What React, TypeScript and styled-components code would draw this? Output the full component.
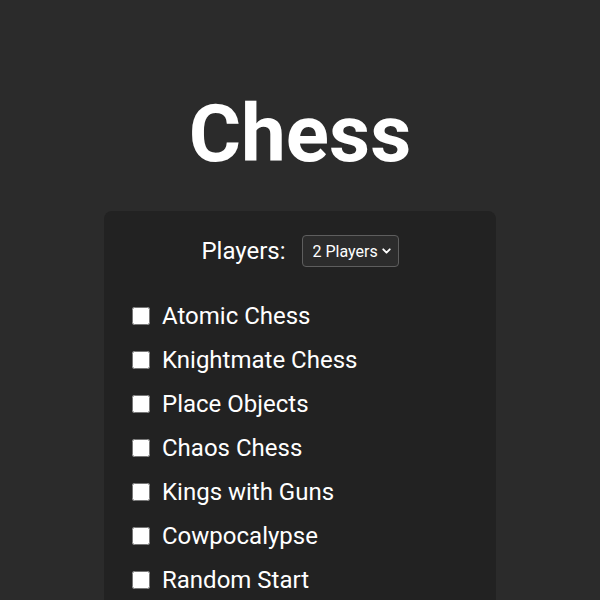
import { createGlobalStyle } from "styled-components";
import styled from "styled-components";
import { ChevronDown } from "lucide-react";

const GlobalStyle = createGlobalStyle`
    html, body {
        margin: 0;
        padding: 0;
        background: #2b2b2b;
        color: #ffffff;
        font-family: Roboto, "Liberation Sans", sans-serif;
    }
`;

const Page = styled.div`
    display: flex;
    flex-direction: column;
    align-items: center;
    padding-top: 94px;
    box-sizing: border-box;
`;

const Title = styled.h1`
    margin: 0;
    font-size: 80px;
    line-height: 1;
    font-weight: 700;
`;

const Panel = styled.div`
    margin-top: 37px;
    width: 392px;
    box-sizing: border-box;
    background: #222222;
    border-radius: 8px;
    padding: 24px 28px 24px 28px;
    display: flex;
    flex-direction: column;
`;

const PlayersRow = styled.div`
    display: flex;
    align-items: center;
    justify-content: center;
    gap: 16px;
    height: 32px;
`;

const Label = styled.label`
    font-size: 24px;
    color: #ffffff;
`;

const SelectWrap = styled.div`
    position: relative;
    display: flex;
    align-items: center;
`;

const Select = styled.select`
    appearance: none;
    -webkit-appearance: none;
    width: 97px;
    height: 32px;
    box-sizing: border-box;
    background: #2c2c2c;
    color: #ffffff;
    border: 1px solid #5e5e5e;
    border-radius: 4px;
    padding: 0 0 0 10px;
    font-family: Roboto, "Liberation Sans", sans-serif;
    font-size: 16px;
    outline: none;
`;

const Arrow = styled.span`
    position: absolute;
    right: 6px;
    top: 50%;
    transform: translateY(-50%);
    display: flex;
    pointer-events: none;
    color: #ffffff;
`;

const Options = styled.ul`
    list-style: none;
    margin: 27px 0 0 0;
    padding: 0;
    display: flex;
    flex-direction: column;
`;

const Option = styled.li`
    display: flex;
    align-items: center;
    gap: 12px;
    height: 44px;
    font-size: 24px;
`;

const Check = styled.input.attrs({ type: "checkbox" })`
    width: 18px;
    height: 18px;
    margin: 0;
    accent-color: #ffffff;
`;

const modes = [
    "Atomic Chess",
    "Knightmate Chess",
    "Place Objects",
    "Chaos Chess",
    "Kings with Guns",
    "Cowpocalypse",
    "Random Start",
];

const App = () => {
    return (
        <>
            <GlobalStyle />
            <Page>
                <Title>Chess</Title>
                <Panel>
                    <PlayersRow>
                        <Label htmlFor="players">Players:</Label>
                        <SelectWrap>
                            <Select id="players" defaultValue="2">
                                <option value="2">2 Players</option>
                                <option value="3">3 Players</option>
                                <option value="4">4 Players</option>
                            </Select>
                            <Arrow>
                                <ChevronDown size={13} strokeWidth={3.5} />
                            </Arrow>
                        </SelectWrap>
                    </PlayersRow>
                    <Options>
                        {modes.map((m) => (
                            <Option key={m}>
                                <Check id={m} />
                                <label htmlFor={m}>{m}</label>
                            </Option>
                        ))}
                    </Options>
                </Panel>
            </Page>
        </>
    );
};

export default App;
